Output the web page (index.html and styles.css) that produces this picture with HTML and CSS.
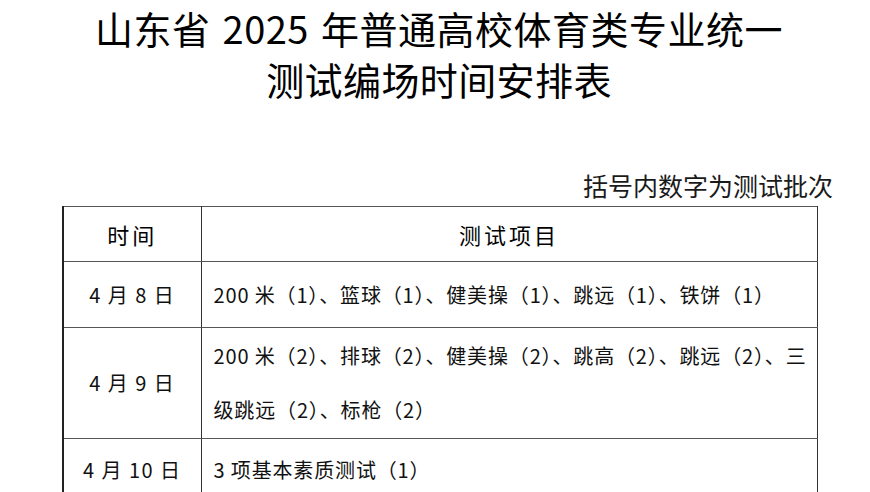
FILE: index.html
```html
<!DOCTYPE html>
<html lang="zh-CN">
<head>
<meta charset="utf-8">
<title>测试编场时间安排表</title>
<link rel="stylesheet" href="styles.css">
</head>
<body>
<div class="page">
  <h1 class="title">
    <span class="title-line1">山东省 2025 年普通高校体育类专业统一</span>
    <span class="title-line2">测试编场时间安排表</span>
  </h1>
  <p class="note">括号内数字为测试批次</p>
  <table class="schedule">
    <colgroup>
      <col class="col-date">
      <col class="col-items">
    </colgroup>
    <thead>
      <tr class="row-head">
        <th>时间</th>
        <th>测试项目</th>
      </tr>
    </thead>
    <tbody>
      <tr class="row-1">
        <td class="date">4 月 8 日</td>
        <td class="items">200 米（1）、篮球（1）、健美操（1）、跳远（1）、铁饼（1）</td>
      </tr>
      <tr class="row-2">
        <td class="date">4 月 9 日</td>
        <td class="items">200 米（2）、排球（2）、健美操（2）、跳高（2）、跳远（2）、三级跳远（2）、标枪（2）</td>
      </tr>
      <tr class="row-3">
        <td class="date">4 月 10 日</td>
        <td class="items">3 项基本素质测试（1）</td>
      </tr>
    </tbody>
  </table>
</div>
</body>
</html>
```

FILE: styles.css
```css
html, body {
  margin: 0;
  padding: 0;
  background: #ffffff;
}

body {
  font-family: "Noto Sans CJK SC", "Noto Sans", sans-serif;
  color: #111111;
  overflow: hidden;
}

.page {
  width: 754px;
  padding-left: 62px;
}

.title {
  margin: 0;
  padding-top: 2px;
  font-size: 38px;
  font-weight: normal;
  line-height: 51px;
  text-align: center;
  color: #000000;
}

.title-line1,
.title-line2 {
  display: block;
  white-space: nowrap;
}

.title-line1 {
  letter-spacing: 0.5px;
  word-spacing: 3px;
}

.title-line2 {
  letter-spacing: 0.4px;
}

.note {
  margin: 66px -17px 6px 0;
  font-size: 25px;
  line-height: 30px;
  text-align: right;
  color: #1a1a1a;
}

.schedule {
  width: 754px;
  border-collapse: collapse;
  table-layout: fixed;
  font-size: 20px;
  border-left: 2px solid #222222;
}

.col-date {
  width: 138px;
}

.col-items {
  width: 616px;
}

.schedule th,
.schedule td {
  border: 1px solid #555555;
  border-left-color: #222222;
  border-right-color: #333333;
  padding: 0;
  vertical-align: middle;
  font-weight: normal;
  line-height: 54px;
}

.schedule th {
  text-align: center;
  font-size: 22px;
  letter-spacing: 3px;
  color: #000000;
}

.row-head {
  height: 55px;
}

.row-1 {
  height: 66px;
}

.row-2 {
  height: 111px;
}

.row-3 td {
  vertical-align: top;
  padding-top: 4px;
}

.date {
  text-align: center;
  letter-spacing: 1.5px;
  word-spacing: 0;
}

.items {
  padding: 0 3px 0 12px !important;
  letter-spacing: 0.85px;
}

.row-3 .items {
  padding-top: 4px !important;
}
```
